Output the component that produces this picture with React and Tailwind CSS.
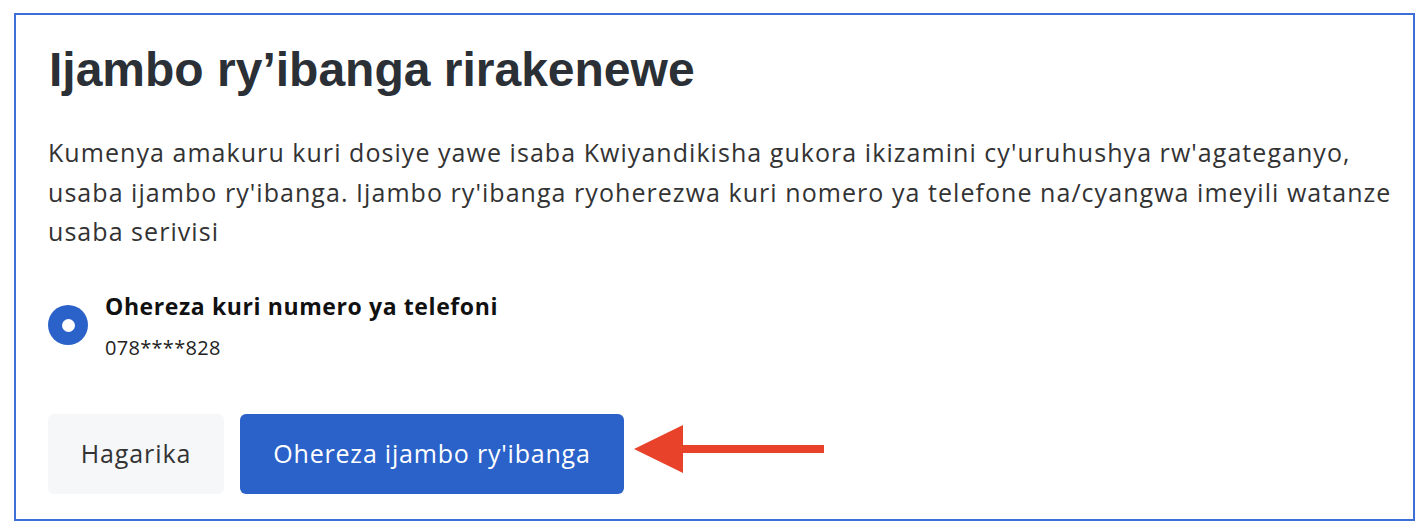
import React, { useState } from 'react';

const bodyFont = { fontFamily: '"Open Sans", "Noto Sans", sans-serif' };

function Arrow() {
  return (
    <svg width="190" height="50" viewBox="0 0 190 50" className="shrink-0 ml-[-6px] mb-[10px]">
      <polygon points="0,25 49,1 49,49" fill="#e8432a" />
      <rect x="46" y="21" width="144" height="8" fill="#e8432a" />
    </svg>
  );
}

export default function App() {
  const [channel, setChannel] = useState('phone');

  return (
    <div className="min-h-screen bg-white pt-[13px] pl-[14px] pr-[11px] pb-[12px]">
      <div className="border-2 border-[#3e6fd6] px-[32px] pt-[27px] pb-[25px] text-[#333333]">
        <h1
          className="text-[48px] font-bold leading-[56px] text-[#2b2f36] ml-[1px]"
          style={{ fontFamily: '"Liberation Sans", Arial, sans-serif' }}
        >
          Ijambo ry’ibanga rirakenewe
        </h1>

        <p
          className="mt-[35px] text-[25px] leading-[39.5px] tracking-[1.05px] whitespace-nowrap text-[#333333]"
          style={bodyFont}
        >
          Kumenya amakuru kuri dosiye yawe isaba Kwiyandikisha gukora ikizamini cy'uruhushya rw'agateganyo,
          <br />
          usaba ijambo ry'ibanga. Ijambo ry'ibanga ryoherezwa kuri nomero ya telefone na/cyangwa imeyili watanze
          <br />
          usaba serivisi
        </p>

        <label className="mt-[39px] flex items-center gap-[17px] cursor-pointer" style={bodyFont}>
          <input
            type="radio"
            name="channel"
            className="sr-only"
            checked={channel === 'phone'}
            onChange={() => setChannel('phone')}
          />
          <span className="w-[40px] h-[40px] rounded-full bg-[#2b62c9] flex items-center justify-center shrink-0">
            <span className="w-[13px] h-[13px] rounded-full bg-white" />
          </span>
          <span className="flex flex-col">
            <span className="text-[23px] font-bold leading-[30px] tracking-[0.6px] text-[#111111]">
              Ohereza kuri numero ya telefoni
            </span>
            <span className="mt-[15px] text-[20px] leading-[24px] tracking-[0.3px] text-[#222222]">
              078****828
            </span>
          </span>
        </label>

        <div className="mt-[54px] flex items-center gap-[16px]" style={bodyFont}>
          <button className="h-[80px] w-[176px] rounded-md bg-[#f6f7f9] text-[25px] tracking-[0.9px] text-[#333333]">
            Hagarika
          </button>
          <button className="h-[80px] w-[384px] rounded-md bg-[#2b62c9] text-[25px] tracking-[0.8px] text-white">
            Ohereza ijambo ry'ibanga
          </button>
          <Arrow />
        </div>
      </div>
    </div>
  );
}
